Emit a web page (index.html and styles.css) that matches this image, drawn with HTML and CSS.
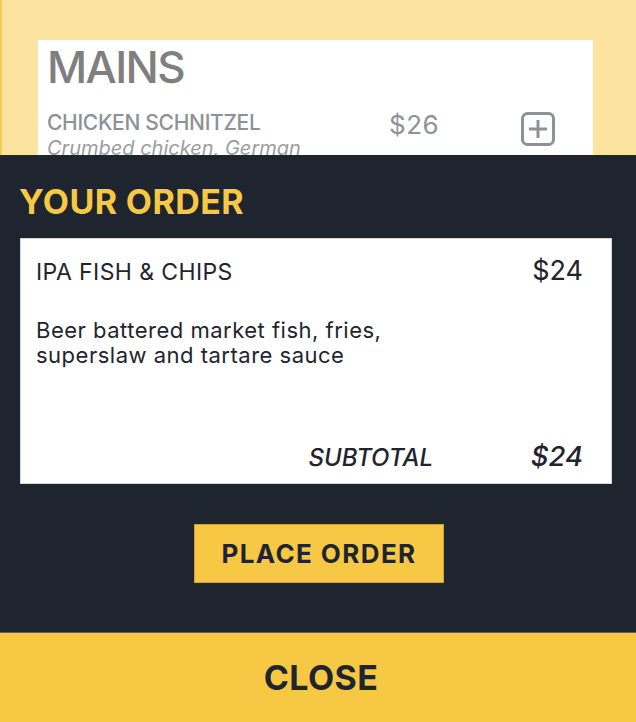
FILE: index.html
```html
<!DOCTYPE html>
<html lang="en">
<head>
<meta charset="utf-8">
<title>Menu</title>
<link rel="stylesheet" href="styles.css">
</head>
<body>
<main class="page">
  <section class="menu-card">
    <h1 class="menu-title">MAINS</h1>
    <div class="menu-item">
      <div class="menu-item-info">
        <div class="menu-item-name">CHICKEN SCHNITZEL</div>
        <div class="menu-item-desc">Crumbed chicken, German</div>
      </div>
      <div class="menu-item-price">$26</div>
      <button class="add-btn" aria-label="Add">
        <svg width="36" height="36" viewBox="0 0 36 36" fill="none" stroke="#8e9196" stroke-width="3">
          <rect x="2.5" y="2.5" width="31" height="31" rx="5"/>
          <path d="M18 9v18M9 18h18"/>
        </svg>
      </button>
    </div>
  </section>
</main>

<div class="order-overlay">
  <section class="order-panel">
    <h2 class="order-title">YOUR ORDER</h2>
    <div class="order-card">
      <div class="order-row">
        <span class="order-name">IPA FISH &amp; CHIPS</span>
        <span class="order-price">$24</span>
      </div>
      <p class="order-desc">Beer battered market fish, fries, superslaw and tartare sauce</p>
      <div class="subtotal-row">
        <span class="subtotal-label">SUBTOTAL</span>
        <span class="subtotal-value">$24</span>
      </div>
    </div>
    <div class="place-wrap">
      <button class="place-btn">PLACE ORDER</button>
    </div>
  </section>
  <button class="close-bar">CLOSE</button>
</div>
</body>
</html>
```

FILE: styles.css
```css
* { box-sizing: border-box; }
html, body { margin: 0; padding: 0; }
body {
  font-family: "Inter", "Liberation Sans", sans-serif;
  background: #fce4a0;
  width: 636px;
  height: 722px;
  overflow: hidden;
  border-left: 2px solid #f7cb4d;
}
button { font-family: inherit; cursor: pointer; }

.page { padding: 40px 43px 0 36px; }

.menu-card {
  background: #ffffff;
  padding: 1px 9px 20px;
  height: 200px;
}
.menu-title {
  margin: 0;
  font-size: 44px;
  font-weight: 500;
  color: #7f7f7f;
  line-height: 52px;
  letter-spacing: -1.6px;
}
.menu-item {
  display: flex;
  align-items: flex-start;
  margin-top: 17px;
}
.menu-item-info { width: 330px; }
.menu-item-name {
  font-size: 21px;
  font-weight: 500;
  color: #8e9196;
  line-height: 26px;
  letter-spacing: -0.3px;
}
.menu-item-desc {
  font-size: 20px;
  font-style: italic;
  color: #9a9ca0;
  line-height: 20px;
  white-space: nowrap;
  padding-top: 2px;
}
.menu-item-price {
  width: 143px;
  padding-left: 12px;
  margin-top: 0;
  font-size: 26px;
  letter-spacing: 0.5px;
  color: #8e9196;
  line-height: 30px;
}
.add-btn {
  border: 0;
  background: none;
  padding: 0;
  margin-top: 1px;
  width: 36px;
  height: 36px;
}

.order-overlay {
  position: fixed;
  left: 0;
  right: 0;
  bottom: 0;
  display: flex;
  flex-direction: column;
}
.order-panel {
  background: #1f252e;
  height: 477px;
  padding: 26px 24px 0 20px;
}
.order-title {
  margin: 0 0 0 -1px;
  font-size: 34px;
  font-weight: 700;
  color: #f7c843;
  line-height: 42px;
  letter-spacing: 0.4px;
}
.order-card {
  margin-top: 15px;
  background: #ffffff;
  border: 1px solid #d4d6d9;
  height: 246px;
  padding: 17px 28px 0 15px;
  display: flex;
  flex-direction: column;
  color: #1f252e;
}
.order-row {
  display: flex;
  justify-content: space-between;
  align-items: baseline;
}
.order-name { font-size: 23px; line-height: 30px; letter-spacing: 0.4px; }
.order-price { font-size: 27px; line-height: 30px; }
.order-desc {
  margin: 31px 0 0;
  font-size: 22px;
  line-height: 25px;
  letter-spacing: 0.5px;
  width: 380px;
}
.subtotal-row {
  margin-top: auto;
  margin-bottom: 10px;
  display: flex;
  justify-content: flex-end;
  align-items: baseline;
  font-style: italic;
}
.subtotal-label { font-size: 24px; line-height: 30px; font-weight: 500; }
.subtotal-value { font-size: 27.5px; line-height: 30px; font-weight: 500; width: 150px; text-align: right; }

.place-wrap {
  display: flex;
  justify-content: center;
  margin-top: 40px;
  padding-left: 6px;
}
.place-btn {
  width: 250px;
  height: 59px;
  background: #f7c843;
  border: 1px solid #c9a43a;
  color: #1f252e;
  font-size: 26px;
  font-weight: 700;
  letter-spacing: 1.4px;
  padding: 0;
}

.close-bar {
  height: 90px;
  width: 100%;
  background: #f7c843;
  border: 0;
  border-top: 1px solid #6b6445;
  color: #1f252e;
  font-size: 34px;
  font-weight: 700;
  letter-spacing: 0.4px;
  padding: 0 0 0 6px;
}
```
